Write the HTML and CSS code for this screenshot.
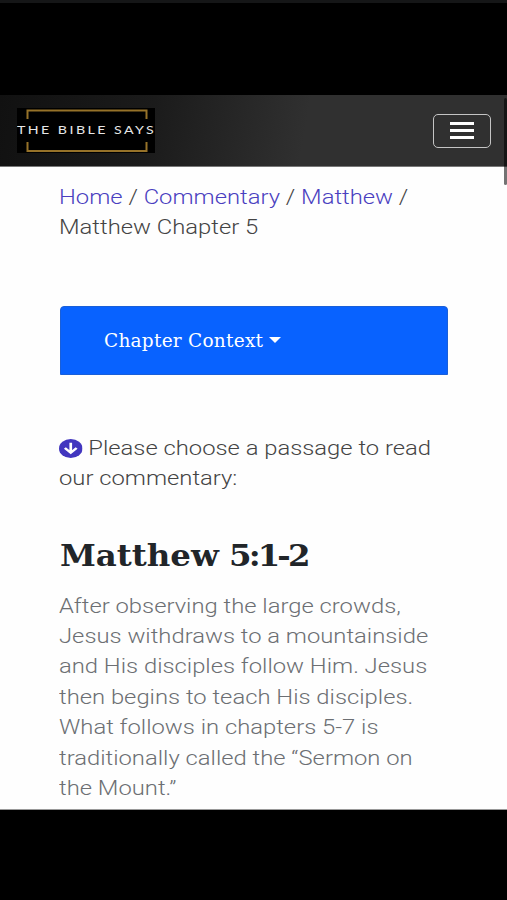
FILE: index.html
```html
<!DOCTYPE html>
<html lang="en">

<head>
    <meta charset="UTF-8" />
    <meta name="viewport" content="width=device-width, initial-scale=1.0" />
    <title>Matthew Chapter 5</title>
    <link rel="stylesheet" href="styles.css">
</head>

<body>
    <div class="page">
        <header class="navbar">
            <a class="logo" href="#">
                <svg class="logo-frame" width="138" height="45" viewBox="0 0 138 45">
                    <path d="M10.5 11V2.5h119V11M10.5 34v9h119V34" fill="none" stroke="#967229" stroke-width="2" />
                </svg>
                <span class="logo-text">THE BIBLE SAYS</span>
            </a>
            <button class="toggler" aria-label="Menu">
                <span class="bar"></span>
                <span class="bar"></span>
                <span class="bar"></span>
            </button>
        </header>
        <div class="scrollbar"></div>

        <main class="content">
            <nav class="text breadcrumb">
                <a href="#">Home</a> / <a href="#">Commentary</a> / <a href="#">Matthew</a> /<br>
                Matthew Chapter 5
            </nav>

            <button class="context">
                <span class="context-label">Chapter Context</span>
                <span class="caret"></span>
            </button>

            <p class="text prompt">
                <svg class="arrow" width="20" height="19" viewBox="0 0 20 20" preserveAspectRatio="none">
                    <circle cx="10" cy="10" r="10" fill="#4236bf" />
                    <path d="M10 4v11M5 9.5l5 5 5-5" fill="none" stroke="#fff" stroke-width="2.3" />
                </svg>
                Please choose a passage to read<br>
                our commentary:
            </p>

            <h2>Matthew <span class="verses">5:1-2</span></h2>
            <p class="text summary">
                After observing the large crowds,<br>
                Jesus withdraws to a mountainside<br>
                and His disciples follow Him. Jesus<br>
                then begins to teach His disciples.<br>
                What follows in chapters 5-7 is<br>
                traditionally called the “Sermon on<br>
                the Mount.”
            </p>
        </main>
    </div>
</body>

</html>
```
FILE: styles.css
```css
* {
    box-sizing: border-box;
}

body {
    margin: 0;
    height: 900px;
    padding-top: 92px;
    border-top: 3px solid #151617;
    background: #000;
    font-family: Roboto, sans-serif;
    overflow: hidden;
}

.page {
    position: relative;
    height: 715px;
    background: #fefefe;
    border-bottom: 1px solid #999;
    overflow: hidden;
}

.navbar {
    display: flex;
    justify-content: space-between;
    align-items: center;
    height: 72px;
    padding: 0 16px 0 17px;
    background: linear-gradient(100deg, #111 0%, #1b1b1b 30%, #303030 60%, #303030 100%);
    border-bottom: 1px solid #777;
}

.logo {
    position: relative;
    display: flex;
    align-items: center;
    width: 138px;
    height: 45px;
    background: #000;
    text-decoration: none;
}

.logo-frame {
    position: absolute;
    top: 0;
    left: 0;
}

.logo-text {
    position: relative;
    top: -1px;
    color: #e6e6e6;
    font-family: Lato, sans-serif;
    font-size: 11px;
    line-height: 14px;
    letter-spacing: 1.9px;
    white-space: nowrap;
    transform: scaleX(1.29);
    transform-origin: left;
}

.toggler {
    display: flex;
    flex-direction: column;
    align-items: center;
    justify-content: center;
    gap: 4px;
    width: 58px;
    height: 34px;
    padding: 0;
    background: transparent;
    border: 1.5px solid #c4c4c4;
    border-radius: 5px;
}

.bar {
    width: 24px;
    height: 3px;
    background: #fff;
}

.scrollbar {
    position: absolute;
    top: 3px;
    right: 0;
    width: 3px;
    height: 87px;
    background: rgba(0, 0, 0, 0.55);
    border-radius: 2px;
}

.content {
    padding: 15px 59px 0 60px;
}

/* wide setting of the body face */
.text {
    width: 330px;
    margin: 0 0 0 -1px;
    font-size: 20.25px;
    font-weight: 300;
    line-height: 30.4px;
    color: #444;
    white-space: nowrap;
    transform: scaleX(1.175);
    transform-origin: left;
}

.breadcrumb a {
    color: #4a3fc0;
    text-decoration: none;
}

.context {
    display: flex;
    align-items: center;
    gap: 6px;
    width: 388px;
    height: 69px;
    margin: 63px 0 58px;
    padding: 0 0 0 43px;
    background: #0862ff;
    border: 1px solid #1a5fd8;
    border-radius: 4px 4px 0 0;
    color: #fff;
}

.context-label {
    font-family: "DejaVu Serif", serif;
    font-size: 18.5px;
    letter-spacing: 0.25px;
}

.caret {
    border: 6.5px solid transparent;
    border-top: 6px solid #fff;
    border-bottom: 0;
}

.arrow {
    vertical-align: -3px;
}

h2 {
    margin: 43px 0 16px;
    font-family: "DejaVu Serif", serif;
    font-size: 30px;
    font-weight: bold;
    line-height: 38px;
    color: #212529;
    white-space: nowrap;
    word-spacing: -1px;
    transform: scaleX(1.08);
    transform-origin: left;
}

.verses {
    letter-spacing: -2.7px;
}

.summary {
    color: #6c6f73;
}
```
